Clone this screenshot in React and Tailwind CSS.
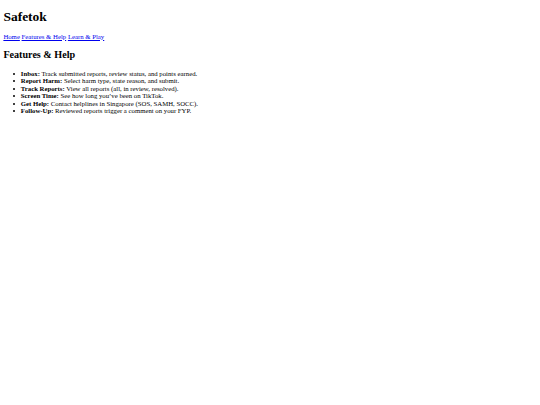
import React from "react";

const items = [
  ["Inbox:", "Track submitted reports, review status, and points earned."],
  ["Report Harm:", "Select harm type, state reason, and submit."],
  ["Track Reports:", "View all reports (all, in review, resolved)."],
  ["Screen Time:", "See how long you\u2019ve been on TikTok."],
  ["Get Help:", "Contact helplines in Singapore (SOS, SAMH, SOCC)."],
  ["Follow-Up:", "Reviewed reports trigger a comment on your FYP."],
];

export default function App() {
  return (
    <div className="min-h-screen bg-white px-[3.375px] py-px text-black font-['Liberation_Serif',serif]">
      <h1 className="my-[8px] text-[13.5px] font-bold leading-[15.5px]">Safetok</h1>

      {/* nav links */}
      <p className="my-[6.75px] text-[6.75px] leading-[7.8px]">
        <a href="#" className="text-[#0000ee] underline">Home</a>{" "}
        <a href="#" className="text-[#0000ee] underline">Features &amp; Help</a>{" "}
        <a href="#" className="text-[#0000ee] underline">Learn &amp; Play</a>
      </p>

      <h2 className="mt-[8.4px] mb-[9.4px] text-[10.125px] font-bold leading-[11.6px]">Features &amp; Help</h2>

      <ul className="my-[6.75px] pl-[10px] text-[6.75px] leading-[7.5px]">
        {items.map(([label, text]) => (
          <li key={label} className="flex items-center">
            <span className="mr-[5.4px] mt-px h-[2px] w-[2px] shrink-0 rounded-full bg-black" />
            <span>
              <b>{label}</b> {text}
            </span>
          </li>
        ))}
      </ul>
    </div>
  );
}
